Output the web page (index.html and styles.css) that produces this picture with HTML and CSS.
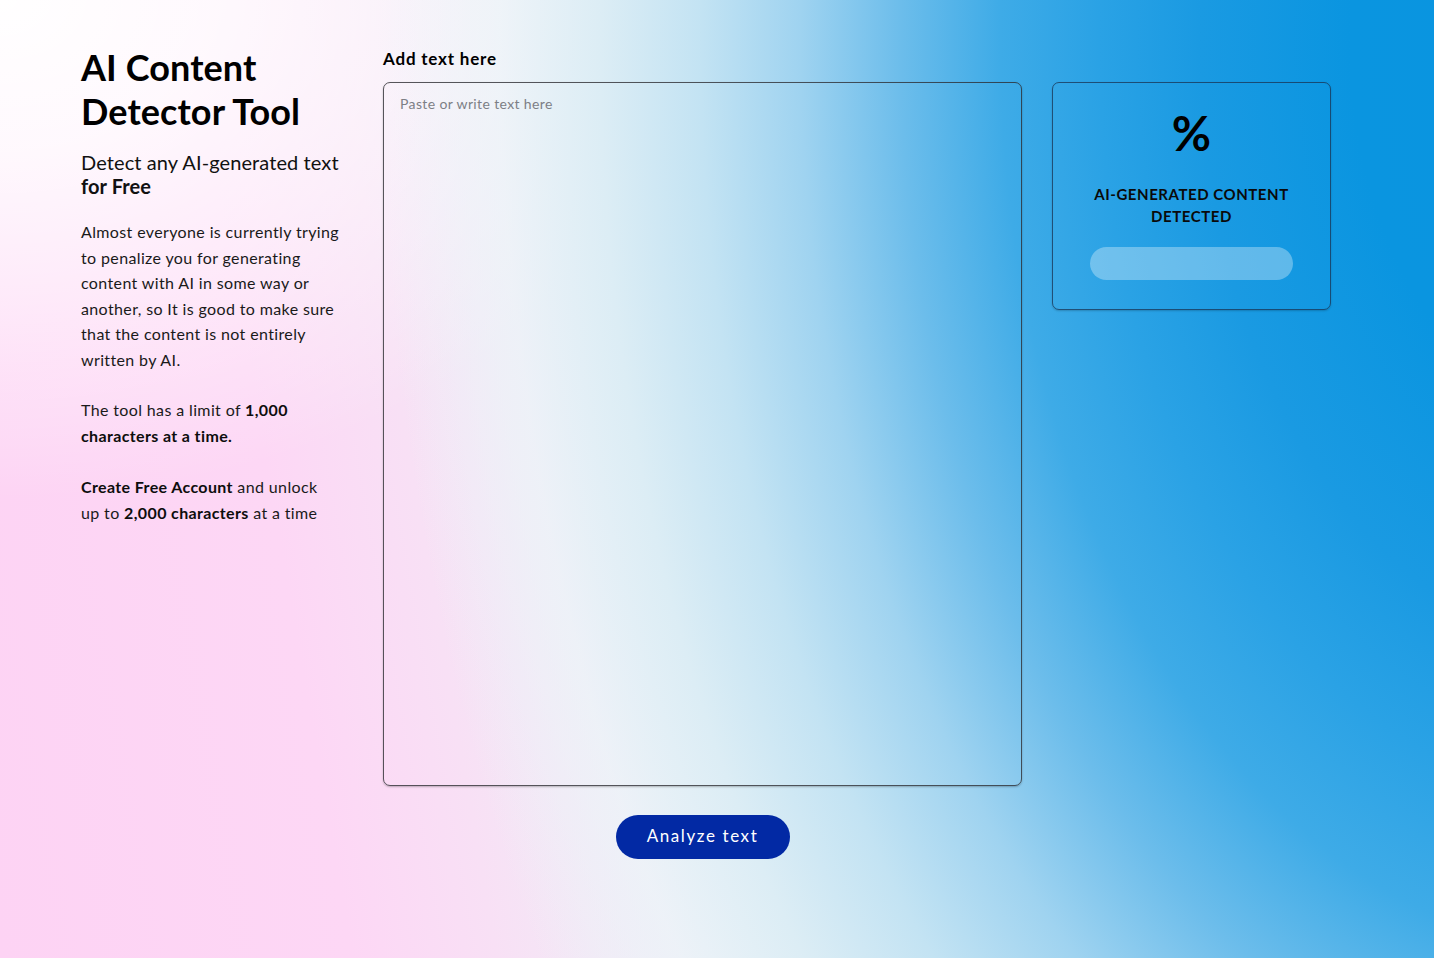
FILE: index.html
```html
<!DOCTYPE html>
<html lang="en">
<head>
<meta charset="utf-8">
<title>AI Content Detector Tool</title>
<link rel="stylesheet" href="styles.css">
</head>
<body>
<main class="page">
  <section class="intro">
    <h1 class="title">AI Content<br>Detector Tool</h1>
    <p class="subtitle">Detect any AI-generated text<br><strong>for Free</strong></p>
    <p class="copy">Almost everyone is currently trying<br>to penalize you for generating<br>content with AI in some way or<br>another, so It is good to make sure<br>that the content is not entirely<br>written by AI.</p>
    <p class="copy">The tool has a limit of <strong>1,000<br>characters at a time.</strong></p>
    <p class="copy copy-last"><strong>Create Free Account</strong> and unlock<br>up to <strong>2,000 characters</strong> at a time</p>
  </section>
  <section class="editor">
    <label class="label" for="text">Add text here</label>
    <textarea id="text" class="input" placeholder="Paste or write text here"></textarea>
    <div class="actions">
      <button class="analyze" type="button">Analyze text</button>
    </div>
  </section>
  <aside class="result">
    <div class="percent">%</div>
    <div class="result-label">AI-GENERATED CONTENT<br>DETECTED</div>
    <div class="meter"></div>
  </aside>
</main>
</body>
</html>
```
FILE: styles.css
```css
html, body {
  margin: 0;
  height: 100%;
}
body {
  min-height: 958px;
  font-family: "Lato", "Liberation Sans", sans-serif;
  color: #111;
  background:
    radial-gradient(1100px 1669px at 1600px 40px,
      #0895e0 0%, #0a95e0 22.7%, #1a9ae2 36.4%, #2aa2e5 45.5%, #3eabe7 54.5%,
      #6cbdeb 63.6%, #9fd3f0 72.7%, #c3e3f3 81.8%, #dcedf5 90.9%,
      rgba(236,244,248,0.7) 100%, rgba(240,242,248,0) 111%),
    radial-gradient(700px 500px at 0 0,
      rgba(255,255,255,1) 0%, rgba(255,255,255,0.85) 30%, rgba(255,255,255,0.5) 60%, rgba(255,255,255,0) 100%),
    linear-gradient(80deg, #fdd3f4 0%, #fdd7f5 22%, #f8e0f5 31%, #f3e8f6 37%, #eeeef7 44%, #f0f4f9 55%, #f0f4f9 100%);
  background-repeat: no-repeat;
}
.page {
  display: flex;
  align-items: flex-start;
  padding: 45px 0 0 81px;
}
.intro {
  width: 262px;
  margin-right: 40px;
}
.title {
  margin: 0;
  font-family: "Lato", sans-serif;
  font-weight: 700;
  font-size: 36px;
  line-height: 44px;
  letter-spacing: 0.1px;
  color: #000;
}
.subtitle {
  margin: 17px 0 0;
  font-size: 20px;
  line-height: 24px;
  letter-spacing: 0.1px;
  color: #111;
}
.subtitle strong {
  font-weight: 700;
}
.copy {
  margin: 21px 0 0;
  font-size: 16px;
  line-height: 25.5px;
  letter-spacing: 0.37px;
  color: #1a1a1a;
}
.copy + .copy {
  margin-top: 25px;
}
.copy + .copy-last {
  margin-top: 26px;
}
.copy strong {
  font-weight: 700;
  color: #0d0d0d;
}
.editor {
  width: 639px;
  display: flex;
  flex-direction: column;
}
.label {
  font-size: 17px;
  font-weight: 700;
  line-height: 26px;
  letter-spacing: 0.8px;
  margin: 1px 0 10px;
  color: #000;
}
.input {
  box-sizing: border-box;
  height: 704px;
  width: 100%;
  margin: 0;
  padding: 12px 16px;
  resize: none;
  background: transparent;
  border: 1px solid rgba(45,45,50,0.8);
  border-radius: 7px;
  box-shadow: 0 1px 2px rgba(0,0,0,0.25);
  font-family: "Lato", sans-serif;
  font-size: 14px;
  line-height: 18px;
  letter-spacing: 0.37px;
  color: #222;
}
.input::placeholder {
  color: #7d7f86;
}
.actions {
  display: flex;
  justify-content: center;
  margin-top: 29px;
}
.analyze {
  width: 174px;
  height: 44px;
  border: 0;
  border-radius: 22px;
  background: #0229a4;
  color: #fff;
  font-family: "Lato", sans-serif;
  font-size: 17px;
  line-height: 20px;
  letter-spacing: 1.6px;
  padding: 0 0 2px;
  cursor: pointer;
}
.result {
  box-sizing: border-box;
  width: 279px;
  height: 228px;
  margin: 37px 0 0 30px;
  border: 1px solid rgba(25,50,80,0.75);
  border-radius: 7px;
  box-shadow: 0 1px 2px rgba(0,0,0,0.2);
  display: flex;
  flex-direction: column;
  align-items: center;
  padding-top: 22px;
}
.percent {
  font-family: "Lato", sans-serif;
  font-weight: 700;
  font-size: 48px;
  line-height: 56px;
  color: #000;
}
.result-label {
  margin-top: 22px;
  text-align: center;
  font-weight: 700;
  font-size: 15px;
  line-height: 22px;
  letter-spacing: 0.55px;
  color: #0a0a0a;
}
.meter {
  margin-top: 20px;
  width: 203px;
  height: 33px;
  border-radius: 17px;
  background: rgba(255,255,255,0.32);
}
```
